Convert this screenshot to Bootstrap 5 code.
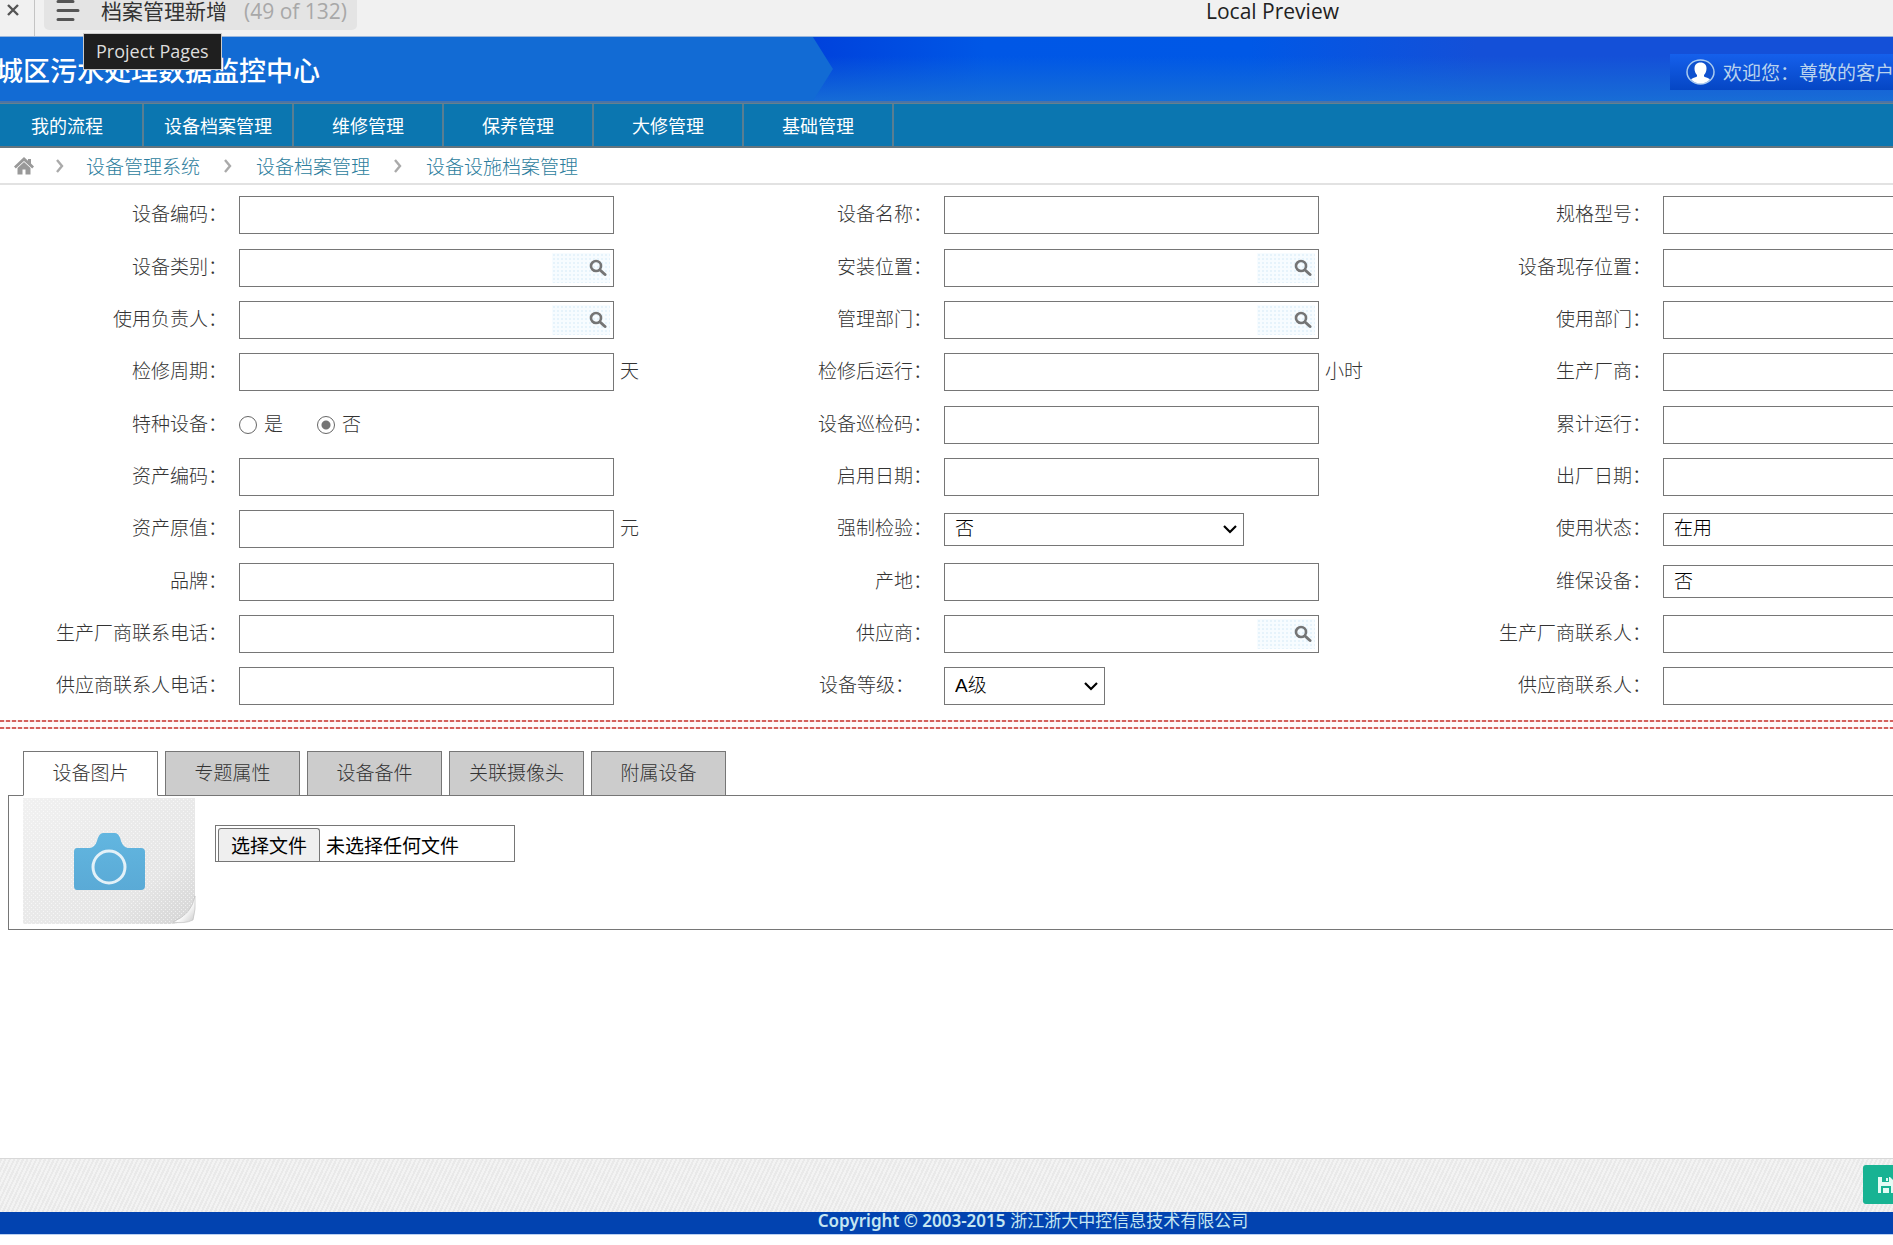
<!DOCTYPE html>
<html lang="zh-CN">
<head>
<meta charset="utf-8">
<meta name="viewport" content="width=device-width, initial-scale=1">
<title>档案管理新增</title>
<link href="https://cdn.jsdelivr.net/npm/bootstrap@5.3.0/dist/css/bootstrap.min.css" rel="stylesheet">
<style>
:root { --line: #767676; --ink: #333; }
body { font-family: "Liberation Sans", "Noto Sans CJK SC", sans-serif; font-size: 19px; line-height: 28px; color: var(--ink); background: #fff; overflow-x: hidden; }
button, input, select { font-family: inherit; }

/* preview bar */
.preview-bar { height: 37px; background: #f1f1f1; border-bottom: 1px solid #9bb7dc; font-family: "Open Sans", "Noto Sans CJK SC", sans-serif; font-size: 21px; display: grid; grid-template-columns: 1206fr 687fr; }
.close-btn { width: 35px; height: 36px; border: 0; border-right: 1px solid #c4c4c4; background: none; padding: 0 8px 16px 0; line-height: 20px; }
.page-pill { height: 30px; margin-left: 9px; padding: 0 10px 8px 12px; background: #e4e4e4; border-radius: 0 0 5px 5px; }
.page-name { font-size: 21px; line-height: 22px; color: #333; margin: 0 17px 0 21px; }
.page-count { line-height: 22px; color: #a8a8a8; }
.preview-title { line-height: 22px; color: #222; }
.page-tip { position: absolute; left: 83px; top: 33px; background: #1f1f1f; color: #ddd; border: 1px solid #ccc; padding: 0 12px; font-size: 18px; line-height: 35px; font-family: "Open Sans", sans-serif; z-index: 5; }

/* banner */
.banner { height: 66px; border-bottom: 2px solid #4c74a6; background: linear-gradient(180deg, rgba(24,104,208,0) 30%, rgba(24,112,214,.9) 100%), linear-gradient(90deg, #0042dc 43%, #0057e6 52%, #0058e6 66%, #1450d8 78%, #1450d8 100%); }
.banner-title { width: 44%; height: 64px; margin: 0; background: #126bd4; clip-path: polygon(0 0, calc(100% - 20px) 0, 100% 50%, calc(100% - 20px) 100%, 0 100%); font-size: 27px; line-height: 71px; color: #fff; white-space: nowrap; }
.banner-title span { margin-left: -4px; }
.welcome { width: 223px; height: 36px; margin-top: 17px; padding-left: 16px; background: linear-gradient(#1560ec, #0546c4); color: #b9d3ee; white-space: nowrap; overflow: hidden; }
.welcome span { line-height: 32px; padding-top: 3px; }

/* navigation */
.main-nav { height: 45px; background: #0b76b0; border-top: 1px solid #64818f; border-bottom: 2px solid #64757f; }
.main-nav a { width: 150px; line-height: 46px; height: 42px; border-right: 2px solid #597e92; color: #fff; font-size: 18px; text-align: center; text-decoration: none; }
.main-nav a:first-child { width: 144px; padding-right: 8px; }
.crumbs { height: 37px; padding-left: 14px; border-bottom: 2px solid #e2e2e2; }
.crumbs a { color: #2c7d9d; text-decoration: none; font-weight: 300; line-height: 32px; padding-top: 4px; }
.crumbs .sep { margin: 0 24px; }
.crumbs .sep-first { margin: 0 22px; }

/* record form */
.record { display: grid; grid-template-columns: minmax(0, 705fr) minmax(0, 719fr) minmax(0, 469fr); grid-auto-rows: 52px 53px 52px; padding: 4px 0 8px; overflow: hidden; font-weight: 300; }
.lbl { flex: 0 0 239px; padding-right: 12px; text-align: right; line-height: 28px; }
.lbl-inset { padding-right: 30px; }
.field { flex: 0 0 375px; width: 375px; height: 38px; border: 1px solid var(--line); border-radius: 0; background: #fff; padding: 0 8px; }
.unit { margin-left: 6px; }
.lookup { flex: 0 0 375px; position: relative; }
.lookup button { position: absolute; right: 4px; top: 4px; width: 58px; height: 30px; padding: 0 3px 0 0; border: 0; text-align: right; line-height: 0; background: radial-gradient(#e6f3fb 1px, transparent 1px) 0 0 / 4px 4px, #f7fcff; }
.pick { width: 300px; height: 33px; border: 1px solid var(--line); border-radius: 0; padding: 0 10px; color: #000; font-weight: 300; appearance: none; line-height: 28px; background: #fff url("data:image/svg+xml,%3Csvg xmlns='http://www.w3.org/2000/svg' viewBox='0 0 14 10'%3E%3Cpath d='M1 2l6 6 6-6' fill='none' stroke='%23000' stroke-width='2.2'/%3E%3C/svg%3E") no-repeat right 6px center / 14px 10px; }
.pick-wide { flex: 0 0 375px; }
.pick-small { width: 161px; height: 38px; }
.dot-radio { appearance: none; width: 18px; height: 18px; margin: 0 7px 0 0; border: 1px solid #666; border-radius: 50%; background: #fff; }
.dot-radio:checked { background: radial-gradient(circle, #757575 4px, #fff 5px); }
.radio-item { margin-right: 34px; }
.double-rule { height: 9px; background: repeating-linear-gradient(90deg, #d4605c 0 4px, #f6dedd 4px 6px) top / 100% 2px no-repeat, repeating-linear-gradient(90deg, #d4605c 0 4px, #f6dedd 4px 6px) bottom / 100% 2px no-repeat, #fffafa; }

/* tabs */
.rec-tabs { gap: 7px; padding: 22px 0 0 23px; }
.rec-tabs button { width: 135px; height: 45px; border: 1px solid var(--line); border-radius: 0; background: #ccc; color: var(--ink); font-weight: 300; padding: 0; margin-bottom: -1px; position: relative; }
.rec-tabs button.active { background: #fff; border-bottom-color: #fff; z-index: 1; }
.tab-box { margin-left: 8px; border: 1px solid var(--line); border-right: 0; height: 135px; padding: 2px 0 0 14px; }
.upload { width: 300px; height: 37px; margin: 27px 0 0 19px; border: 1px solid var(--line); padding: 2px 0 0 2px; color: #000; position: relative; }
.upload input { position: absolute; inset: 0; width: 100%; opacity: 0; }
.upload-btn { width: 102px; height: 33px; border: 1px solid var(--line); border-bottom: 0; border-radius: 3px 3px 0 0; background: #efefef; text-align: center; line-height: 36px; }
.upload-name { margin-left: 6px; line-height: 38px; }

/* bottom */
.action-bar { height: 54px; border-top: 1px solid #d8d8d8; background: repeating-linear-gradient(115deg, #e9e9e9 0 2px, #f3f3f3 2px 4px); overflow: hidden; }
.save-btn { flex: none; width: 100px; height: 39px; margin: 6px -70px 0 0; border: 0; border-radius: 3px; background: #18b393; padding: 0 0 0 14px; text-align: left; line-height: 0; }
.copy-bar { height: 23px; margin-bottom: 10px; background: #0243b0; color: #c5e6f2; line-height: 17px; border-bottom: 1px solid #b9d0f2; padding-left: 43.2%; font-size: 17px; white-space: nowrap; }
.copy-bar b { font-family: "Noto Sans", sans-serif; font-size: 17px; font-weight: 600; }
</style>
<script src="https://cdn.jsdelivr.net/npm/bootstrap@5.3.0/dist/js/bootstrap.bundle.min.js"></script>
</head>
<body class="d-flex flex-column min-vh-100 position-relative">

<svg class="d-none">
  <symbol id="lens" viewBox="0 0 18 18"><circle cx="7" cy="7" r="5" fill="none" stroke="#757575" stroke-width="2.6"/><path d="M11 11l5 4.500" stroke="#757575" stroke-width="3" stroke-linecap="round"/></symbol>
  <symbol id="chev" viewBox="0 0 8 14"><path d="M1 1l5 6-5 6" fill="none" stroke="#aaa" stroke-width="2.400"/></symbol>
</svg>

<div class="preview-bar">
  <div class="d-flex align-items-start">
    <button class="close-btn d-flex align-items-center justify-content-center" type="button" aria-label="关闭"><svg width="14" height="14" viewBox="0 0 14 14"><path d="M2 2l10 10M12 2L2 12" stroke="#555" stroke-width="2.4"/></svg></button>
    <div class="page-pill d-flex align-items-start">
      <svg width="24" height="22" viewBox="0 0 24 22"><path d="M2 1.500h15M2 10.500h20M2 19.500h15" stroke="#555" stroke-width="3" stroke-linecap="round"/></svg>
      <span class="page-name">档案管理新增</span><span class="page-count">(49 of 132)</span>
    </div>
  </div>
  <div class="preview-title">Local Preview</div>
</div>
<div class="page-tip" role="tooltip">Project Pages</div>

<header class="banner d-flex justify-content-between">
  <h1 class="banner-title"><span>城区污水处理数据监控中心</span></h1>
  <div class="welcome d-flex align-items-center">
    <svg class="flex-shrink-0 me-2" width="29" height="26" viewBox="0 0 29 26"><ellipse cx="14.500" cy="13" rx="13.500" ry="12" fill="#0f51cf" stroke="#a9cbf0" stroke-width="1.500"/><path d="M14.500 3.500c-4 0-6 2.500-6 6 0 3 1 5 2.500 6.500v1.500c-2 1-4.500 1.500-6 2.800 2.500 3 6 4.200 9.500 4.200s7-1.200 9.500-4.200c-1.500-1.300-4-1.800-6-2.800V16c1.500-1.500 2.500-3.500 2.500-6.500 0-3.500-2-6-6-6z" fill="#fff"/></svg>
    <span>欢迎您：尊敬的客户</span>
  </div>
</header>

<nav class="main-nav d-flex">
  <a href="#">我的流程</a><a href="#">设备档案管理</a><a href="#">维修管理</a><a href="#">保养管理</a><a href="#">大修管理</a><a href="#">基础管理</a>
</nav>

<nav class="crumbs d-flex align-items-center" aria-label="breadcrumb">
  <a href="#" aria-label="首页" class="d-flex pt-0"><svg width="20" height="18" viewBox="0 0 20 18"><path d="M10 0L0 9.500 1.800 11.500 10 4l8.200 7.500L20 9.500l-3-3V2h-3v1.800z" fill="#999"/><path d="M10 5L3.500 11v6.500H8.500v-5h3v5h5V11z" fill="#999"/></svg></a>
  <svg class="sep-first" width="8" height="14"><use href="#chev"/></svg>
  <a href="#">设备管理系统</a>
  <svg class="sep" width="8" height="14"><use href="#chev"/></svg>
  <a href="#">设备档案管理</a>
  <svg class="sep" width="8" height="14"><use href="#chev"/></svg>
  <a href="#">设备设施档案管理</a>
</nav>

<form class="record">
  <div class="d-flex align-items-center"><label class="lbl" for="f1">设备编码：</label><input class="field" id="f1" type="text"></div>
  <div class="d-flex align-items-center"><label class="lbl" for="f2">设备名称：</label><input class="field" id="f2" type="text"></div>
  <div class="d-flex align-items-center"><label class="lbl" for="f3">规格型号：</label><input class="field" id="f3" type="text"></div>

  <div class="d-flex align-items-center"><label class="lbl" for="f4">设备类别：</label><div class="lookup d-flex"><input class="field" id="f4" type="text"><button type="button" aria-label="查找"><svg width="18" height="18"><use href="#lens"/></svg></button></div></div>
  <div class="d-flex align-items-center"><label class="lbl" for="f5">安装位置：</label><div class="lookup d-flex"><input class="field" id="f5" type="text"><button type="button" aria-label="查找"><svg width="18" height="18"><use href="#lens"/></svg></button></div></div>
  <div class="d-flex align-items-center"><label class="lbl" for="f6">设备现存位置：</label><input class="field" id="f6" type="text"></div>

  <div class="d-flex align-items-center"><label class="lbl" for="f7">使用负责人：</label><div class="lookup d-flex"><input class="field" id="f7" type="text"><button type="button" aria-label="查找"><svg width="18" height="18"><use href="#lens"/></svg></button></div></div>
  <div class="d-flex align-items-center"><label class="lbl" for="f8">管理部门：</label><div class="lookup d-flex"><input class="field" id="f8" type="text"><button type="button" aria-label="查找"><svg width="18" height="18"><use href="#lens"/></svg></button></div></div>
  <div class="d-flex align-items-center"><label class="lbl" for="f9">使用部门：</label><input class="field" id="f9" type="text"></div>

  <div class="d-flex align-items-center"><label class="lbl" for="f10">检修周期：</label><input class="field" id="f10" type="text"><span class="unit">天</span></div>
  <div class="d-flex align-items-center"><label class="lbl" for="f11">检修后运行：</label><input class="field" id="f11" type="text"><span class="unit">小时</span></div>
  <div class="d-flex align-items-center"><label class="lbl" for="f12">生产厂商：</label><input class="field" id="f12" type="text"></div>

  <div class="d-flex align-items-center" role="radiogroup" aria-labelledby="special"><span class="lbl" id="special">特种设备：</span><label class="radio-item d-flex align-items-center"><input class="dot-radio" type="radio" name="special">是</label><label class="radio-item d-flex align-items-center"><input class="dot-radio" type="radio" name="special" checked>否</label></div>
  <div class="d-flex align-items-center"><label class="lbl" for="f13">设备巡检码：</label><input class="field" id="f13" type="text"></div>
  <div class="d-flex align-items-center"><label class="lbl" for="f14">累计运行：</label><input class="field" id="f14" type="text"></div>

  <div class="d-flex align-items-center"><label class="lbl" for="f15">资产编码：</label><input class="field" id="f15" type="text"></div>
  <div class="d-flex align-items-center"><label class="lbl" for="f16">启用日期：</label><input class="field" id="f16" type="text"></div>
  <div class="d-flex align-items-center"><label class="lbl" for="f17">出厂日期：</label><input class="field" id="f17" type="text"></div>

  <div class="d-flex align-items-center"><label class="lbl" for="f18">资产原值：</label><input class="field" id="f18" type="text"><span class="unit">元</span></div>
  <div class="d-flex align-items-center"><label class="lbl" for="f19">强制检验：</label><select class="pick" id="f19"><option>否</option><option>是</option></select></div>
  <div class="d-flex align-items-center"><label class="lbl" for="f20">使用状态：</label><select class="pick pick-wide" id="f20"><option>在用</option></select></div>

  <div class="d-flex align-items-center"><label class="lbl" for="f21">品牌：</label><input class="field" id="f21" type="text"></div>
  <div class="d-flex align-items-center"><label class="lbl" for="f22">产地：</label><input class="field" id="f22" type="text"></div>
  <div class="d-flex align-items-center"><label class="lbl" for="f23">维保设备：</label><select class="pick pick-wide" id="f23"><option>否</option><option>是</option></select></div>

  <div class="d-flex align-items-center"><label class="lbl" for="f24">生产厂商联系电话：</label><input class="field" id="f24" type="text"></div>
  <div class="d-flex align-items-center"><label class="lbl" for="f25">供应商：</label><div class="lookup d-flex"><input class="field" id="f25" type="text"><button type="button" aria-label="查找"><svg width="18" height="18"><use href="#lens"/></svg></button></div></div>
  <div class="d-flex align-items-center"><label class="lbl" for="f26">生产厂商联系人：</label><input class="field" id="f26" type="text"></div>

  <div class="d-flex align-items-center"><label class="lbl" for="f27">供应商联系人电话：</label><input class="field" id="f27" type="text"></div>
  <div class="d-flex align-items-center"><label class="lbl lbl-inset" for="f28">设备等级：</label><select class="pick pick-small" id="f28"><option>A级</option></select></div>
  <div class="d-flex align-items-center"><label class="lbl" for="f29">供应商联系人：</label><input class="field" id="f29" type="text"></div>
</form>
<div class="double-rule"></div>

<div class="rec-tabs d-flex" role="tablist">
  <button type="button" role="tab" class="active">设备图片</button>
  <button type="button" role="tab">专题属性</button>
  <button type="button" role="tab">设备备件</button>
  <button type="button" role="tab">关联摄像头</button>
  <button type="button" role="tab">附属设备</button>
</div>
<section class="tab-box d-flex align-items-start">
  <svg class="flex-shrink-0" width="173" height="127" viewBox="0 0 173 127">
    <defs>
      <linearGradient id="paper" x1="0" y1="0" x2="1" y2="1"><stop offset="0" stop-color="#f1f1f1"/><stop offset=".7" stop-color="#e6e6e6"/><stop offset="1" stop-color="#d4d4d4"/></linearGradient>
      <linearGradient id="curl" x1="0" y1="0" x2="1" y2="1"><stop offset=".3" stop-color="#d8d8d8"/><stop offset=".55" stop-color="#fff"/><stop offset="1" stop-color="#c8c8c8"/></linearGradient>
      <linearGradient id="cam" x1="0" y1="0" x2="0" y2="1"><stop offset="0" stop-color="#62b6e0"/><stop offset="1" stop-color="#5aaad6"/></linearGradient>
      <pattern id="grain" width="4" height="4" patternUnits="userSpaceOnUse"><path d="M0 1.500h1M2 3.500h1" stroke="#fff" stroke-opacity=".6"/></pattern>
    </defs>
    <path d="M0 0h172v98q-1 14-6 22-8 6-20 6H0z" fill="url(#paper)"/>
    <path d="M0 0h172v98q-1 14-6 22-8 6-20 6H0z" fill="url(#grain)"/>
    <path d="M172 98q-3 18-22 26 12 2 20-2 3-10 2-24z" fill="url(#curl)" stroke="#bbb" stroke-width=".6"/>
    <path d="M54 50h13q5-1 7-7 2-8 6-8h12q4 0 6 8 2 6 7 7h13q4 0 4 4v34q0 4-4 4H54q-3 0-3-4V54q0-4 3-4z" fill="url(#cam)"/>
    <circle cx="86" cy="69" r="16" fill="none" stroke="#e3f1f8" stroke-width="3"/>
  </svg>
  <label class="upload d-flex align-items-start"><span class="upload-btn">选择文件</span><span class="upload-name">未选择任何文件</span><input type="file"></label>
</section>

<div class="action-bar d-flex justify-content-end mt-auto">
  <button class="save-btn" type="button" aria-label="保存"><svg width="18" height="18" viewBox="0 0 18 18"><path d="M1 1h12l4 4v12H1z" fill="#e4fbf4"/><path d="M5 1h7v5H5zM4 10h10v7H4z" fill="#18b393"/><path d="M9 2h2v3H9zM6 12h6v5H6z" fill="#e4fbf4"/></svg></button>
</div>
<footer class="copy-bar"><b>Copyright © 2003-2015</b> 浙江浙大中控信息技术有限公司</footer>
</body>
</html>
